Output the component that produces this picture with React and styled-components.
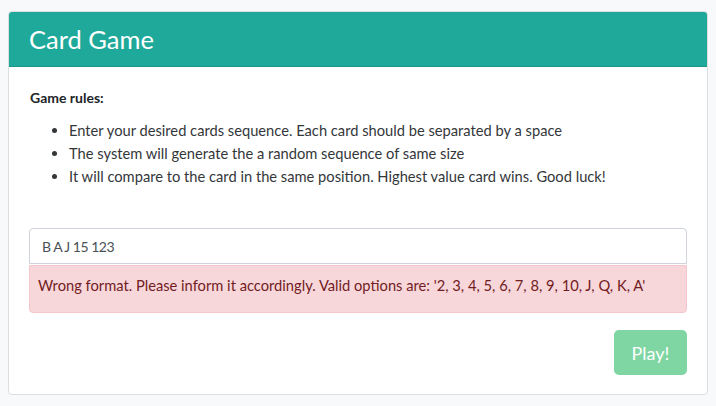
import React, { useState } from "react";
import styled, { createGlobalStyle } from "styled-components";

const GlobalStyle = createGlobalStyle`
  html, body {
    margin: 0;
    background: #f8f9fb;
  }
  body {
    padding: 11px 8px 0;
    font-family: Lato, "Open Sans", sans-serif;
    color: #212529;
  }
`;

const Card = styled.div`
  width: 700px;
  height: 384px;
  box-sizing: border-box;
  background: #fff;
  border: 1px solid #dcdee0;
  border-radius: 4px;
  display: flex;
  flex-direction: column;
  overflow: hidden;
`;

const CardHeader = styled.div`
  height: 55px;
  box-sizing: border-box;
  background: #1fa99a;
  border-bottom: 1px solid #1b9587;
  display: flex;
  align-items: center;
  padding: 0 20px;
`;

const Title = styled.h3`
  margin: 0;
  font-size: 25.5px;
  font-weight: 400;
  color: #fff;
`;

const CardBody = styled.div`
  padding: 22px 20px 18px;
  display: flex;
  flex-direction: column;
`;

const RulesTitle = styled.p`
  margin: 0 0 13px 1px;
  font-size: 14px;
  font-weight: 700;
  color: #212529;
`;

const RulesList = styled.ul`
  margin: 0 0 40px;
  padding-left: 40px;
`;

const Rule = styled.li`
  font-size: 14.7px;
  line-height: 23px;
  color: #34373a;
`;

const CardInput = styled.input`
  height: 36px;
  box-sizing: border-box;
  border: 1px solid #ced4da;
  border-radius: 4px 4px 0 0;
  padding: 0 12px;
  font-family: inherit;
  font-size: 14px;
  letter-spacing: -0.5px;
  color: #495057;
  outline: none;
`;

const Alert = styled.div`
  margin-top: 1px;
  height: 48px;
  box-sizing: border-box;
  background: #f8d7da;
  border: 1px solid #f5c6cb;
  border-radius: 0 0 4px 4px;
  padding: 10px 8px;
  font-size: 14.7px;
  color: #721c24;
`;

const Actions = styled.div`
  display: flex;
  justify-content: flex-end;
  margin-top: 17px;
`;

const PlayButton = styled.button`
  width: 73px;
  height: 45px;
  border: none;
  border-radius: 5px;
  background: #7fd6a3;
  color: #fff;
  font-family: inherit;
  font-size: 18px;
  cursor: default;
`;

const rules = [
  "Enter your desired cards sequence. Each card should be separated by a space",
  "The system will generate the a random sequence of same size",
  "It will compare to the card in the same position. Highest value card wins. Good luck!",
];

export default function App() {
  const [cards, setCards] = useState("B A J 15 123");

  return (
    <>
      <GlobalStyle />
      <Card>
        <CardHeader>
          <Title>Card Game</Title>
        </CardHeader>
        <CardBody>
          <RulesTitle>Game rules:</RulesTitle>
          <RulesList>
            {rules.map((r) => (
              <Rule key={r}>{r}</Rule>
            ))}
          </RulesList>
          <CardInput value={cards} onChange={(e) => setCards(e.target.value)} />
          <Alert>
            Wrong format. Please inform it accordingly. Valid options are: '2, 3, 4, 5, 6, 7, 8, 9, 10, J, Q, K, A'
          </Alert>
          <Actions>
            <PlayButton disabled>Play!</PlayButton>
          </Actions>
        </CardBody>
      </Card>
    </>
  );
}
